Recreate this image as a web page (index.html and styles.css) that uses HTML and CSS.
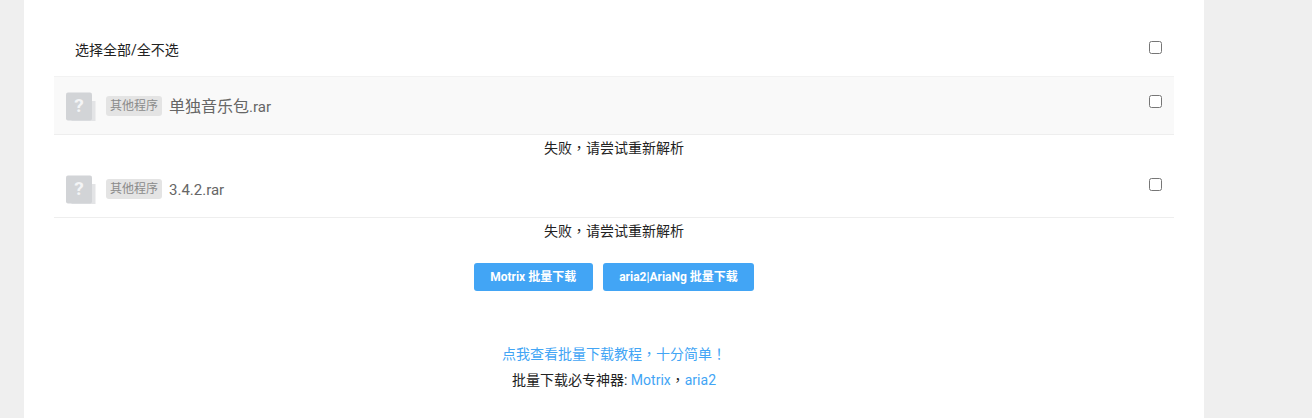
FILE: index.html
```html
<!DOCTYPE html>
<html lang="zh-CN">
<head>
  <meta charset="UTF-8" />
  <title>批量下载</title>
  <link rel="stylesheet" href="styles.css">
</head>
<body>
  <main class="card">
    <div class="select-all">
      <span class="select-all-label">选择全部/全不选</span>
      <input type="checkbox" class="check" />
    </div>

    <div class="file-row file-row-grey">
      <svg class="file-icon" viewBox="0 0 30 30" aria-hidden="true">
        <path d="M24 10h5.500v20h-24V26H24z" fill="#e3e4e6" />
        <rect x="0" y="1.500" width="26" height="28" rx="2" fill="#d2d4d7" />
        <text x="13" y="21" class="file-icon-mark">?</text>
      </svg>
      <span class="tag">其他程序</span>
      <span class="file-name"><span class="file-name-cjk">单独音乐包</span>.rar</span>
      <input type="checkbox" class="check" />
    </div>
    <div class="status">失败<span class="punct">，</span>请尝试重新解析</div>

    <div class="file-row">
      <svg class="file-icon" viewBox="0 0 30 30" aria-hidden="true">
        <path d="M24 10h5.500v20h-24V26H24z" fill="#e3e4e6" />
        <rect x="0" y="1.500" width="26" height="28" rx="2" fill="#d2d4d7" />
        <text x="13" y="21" class="file-icon-mark">?</text>
      </svg>
      <span class="tag">其他程序</span>
      <span class="file-name">3.4.2.rar</span>
      <input type="checkbox" class="check" />
    </div>
    <div class="status">失败<span class="punct">，</span>请尝试重新解析</div>

    <div class="actions">
      <a href="#" class="btn">Motrix 批量下载</a>
      <a href="#" class="btn">aria2|AriaNg 批量下载</a>
    </div>

    <div class="help">
      <p class="help-line"><a href="#">点我查看批量下载教程<span class="punct">，</span>十分简单<span class="punct">！</span></a></p>
      <p class="help-line">批量下载必专神器: <a href="#">Motrix</a><span class="punct">，</span><a href="#">aria2</a></p>
    </div>
  </main>
</body>
</html>
```

FILE: styles.css
```css
html,
body {
  height: 100%;
}

body {
  margin: 0;
  overflow: hidden;
  background-color: #efefef;
  color: #222;
  font-family: Roboto, "Noto Sans CJK SC", sans-serif;
  font-size: 14px;
}

a {
  color: #42a5f5;
  text-decoration: none;
}

/* 全角标点居中 */
.punct {
  font-family: "Noto Sans CJK TC", sans-serif;
  font-feature-settings: "locl" 0;
}

.card {
  box-sizing: border-box;
  width: 1180px;
  height: 100%;
  margin-left: 24px;
  padding: 0 30px;
  background-color: #fff;
}

.select-all {
  display: flex;
  align-items: center;
  justify-content: space-between;
  box-sizing: border-box;
  height: 76px;
  padding: 24px 12px 0 21px;
}

.select-all .check {
  margin-top: -6px;
}

.select-all-label {
  line-height: 20px;
}

.check {
  width: 13px;
  height: 13px;
  margin: 0;
}

.file-row {
  display: flex;
  align-items: center;
  box-sizing: border-box;
  height: 59px;
  padding: 0 12px;
  border-top: 1px solid transparent;
  border-bottom: 1px solid #eee;
}

.file-row-grey {
  background-color: #f9f9f9;
  border-top-color: #f2f2f2;
}

.file-row .check {
  margin-left: auto;
  margin-top: -8px;
}

.file-icon {
  width: 30px;
  height: 30px;
  margin-right: 10px;
}

.file-icon-mark {
  fill: #f4f5f6;
  font-size: 19px;
  font-weight: bold;
  text-anchor: middle;
}

.tag {
  padding: 0 4px;
  border-radius: 3px;
  background-color: #e4e4e4;
  color: #8b8b8b;
  font-size: 12px;
  line-height: 20px;
}

.file-name {
  margin-top: 2px;
  margin-left: 7px;
  color: #666;
  font-size: 15px;
  line-height: 20px;
}

.file-name-cjk {
  font-size: 16px;
}

.status {
  height: 24px;
  line-height: 24px;
  text-align: center;
}

.actions {
  display: flex;
  justify-content: center;
  gap: 10px;
  margin-top: 21px;
}

.btn {
  display: block;
  height: 28px;
  padding: 0 16.5px;
  border-radius: 3px;
  background-color: #42a5f5;
  color: #fff;
  font-size: 12px;
  font-weight: bold;
  line-height: 29px;
}

.help {
  margin-top: 52px;
  text-align: center;
}

.help-line {
  margin: 0 0 5px;
  line-height: 20px;
}
```
